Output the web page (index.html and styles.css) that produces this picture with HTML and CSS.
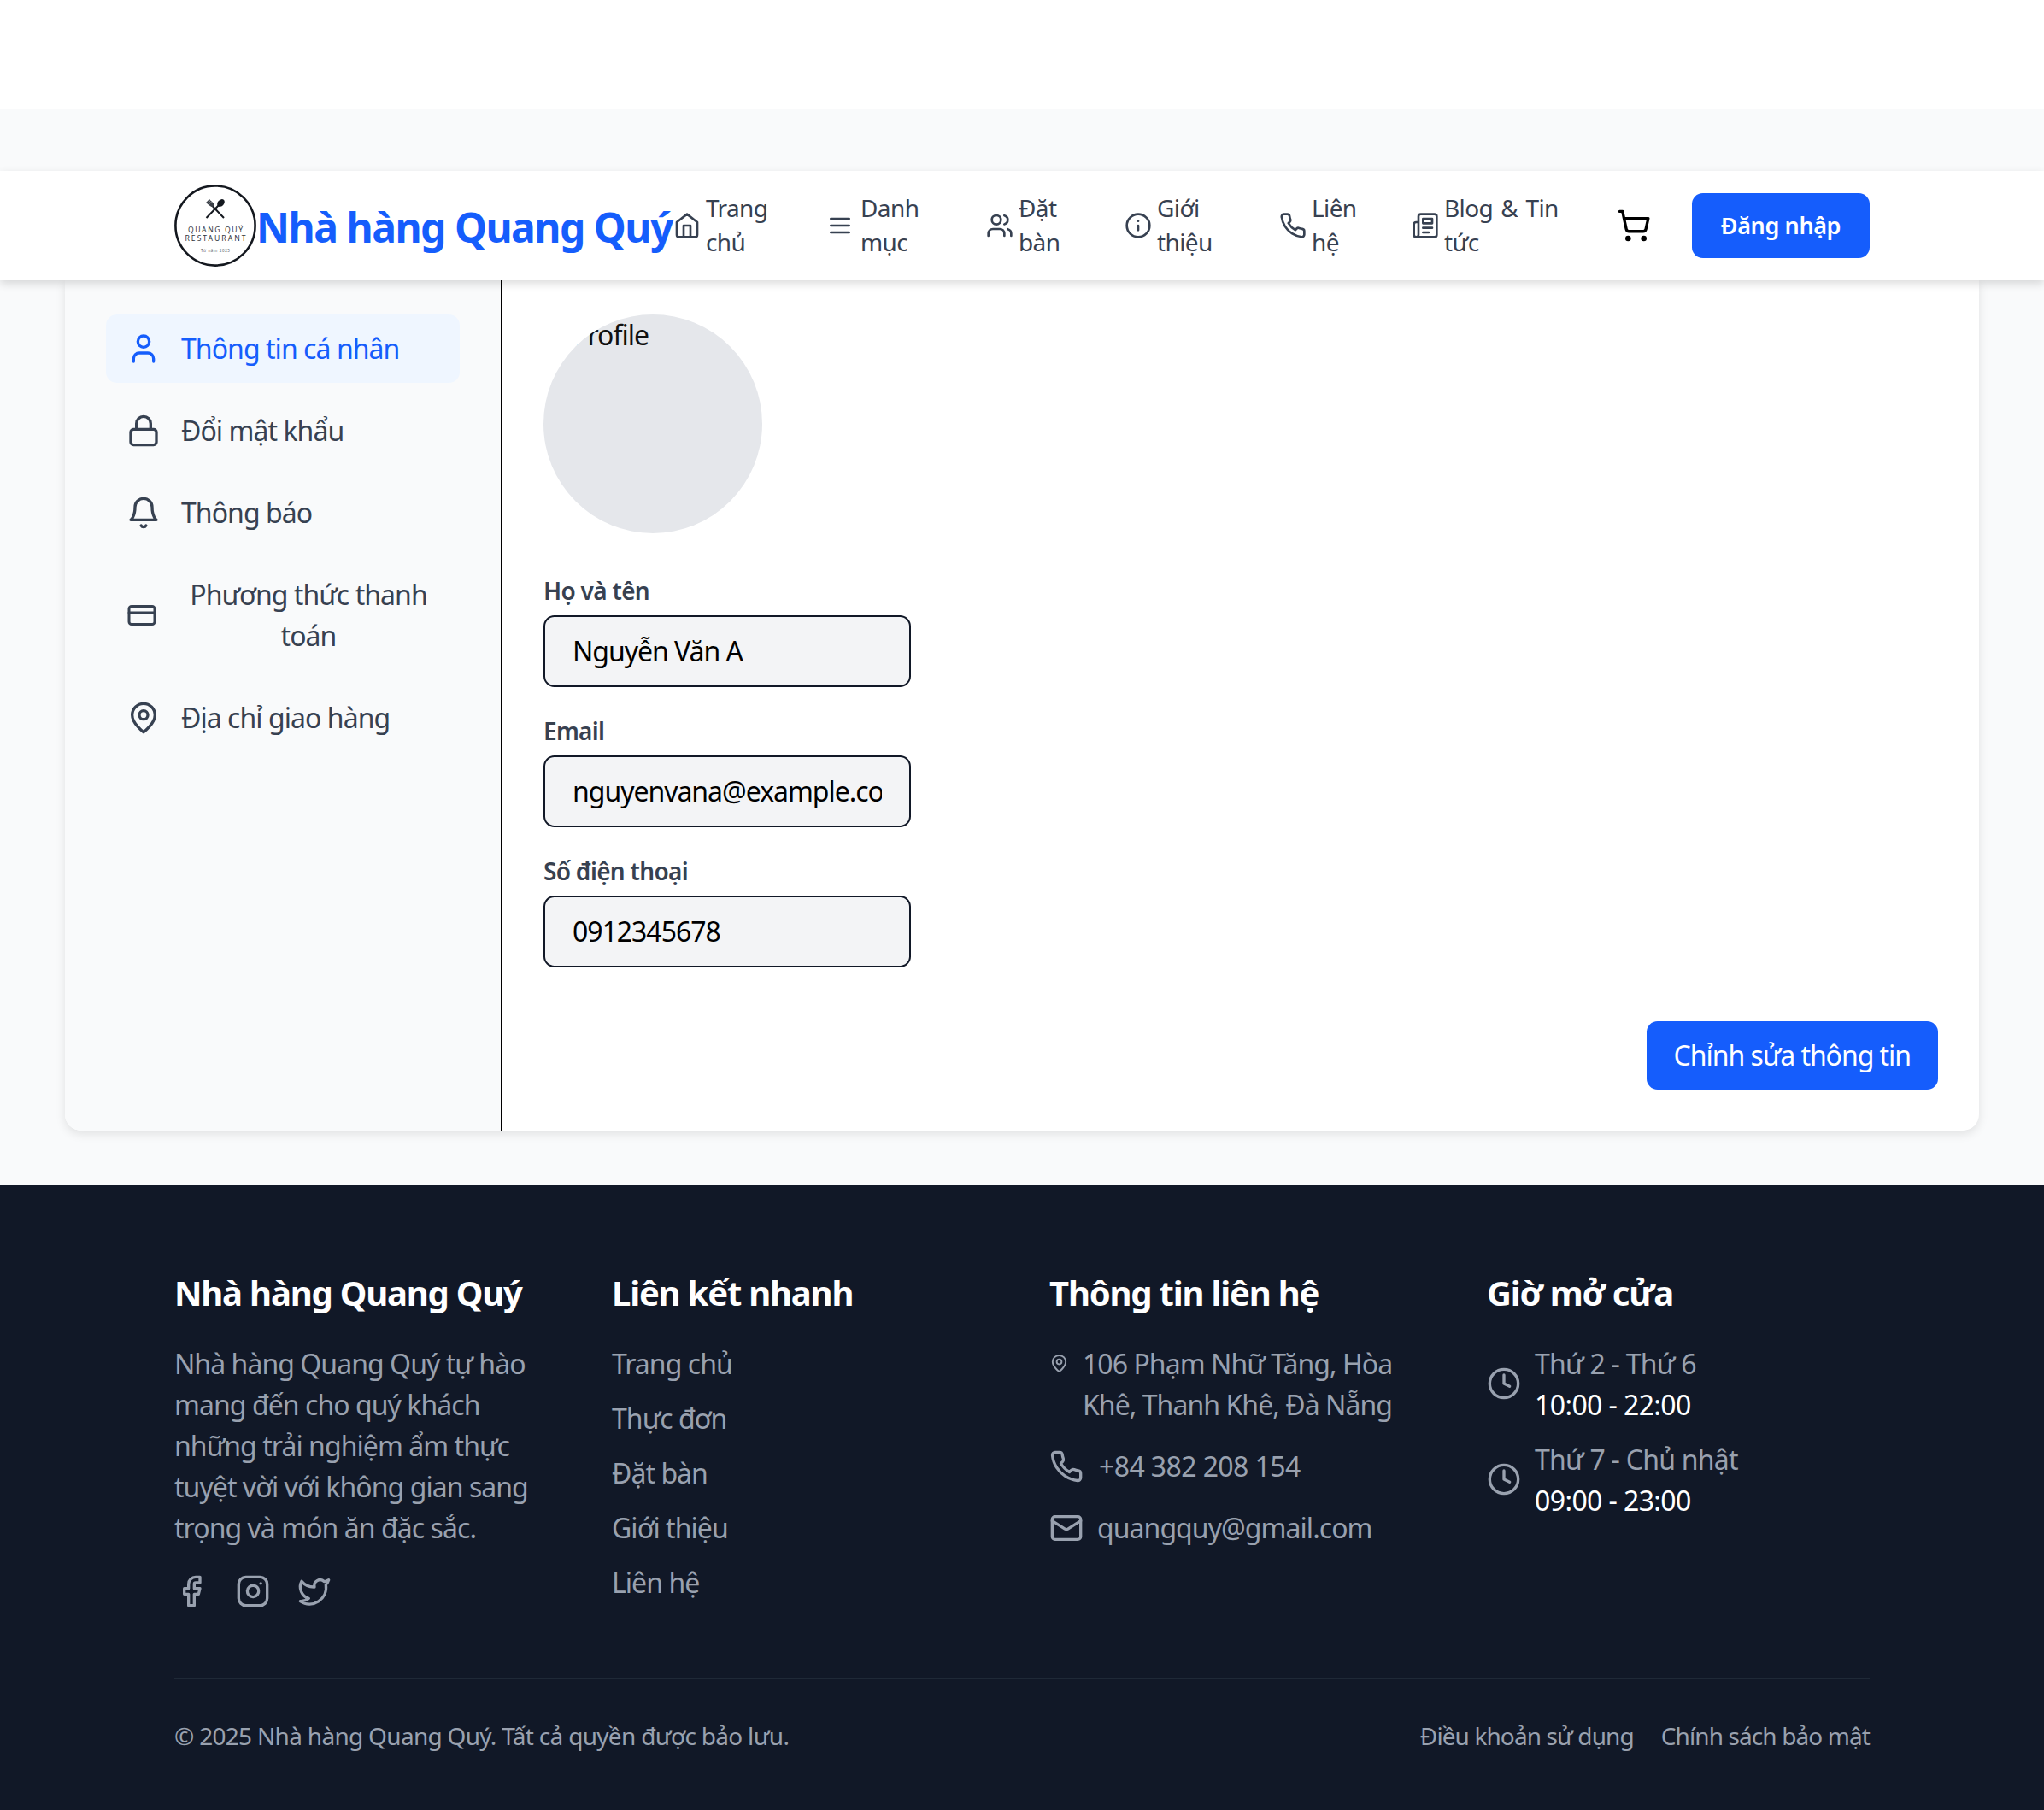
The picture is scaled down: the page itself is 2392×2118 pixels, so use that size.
FILE: index.html
```html
<!DOCTYPE html>
<html lang="vi">
<head>
<meta charset="utf-8">
<title>Nhà hàng Quang Quý</title>
<link rel="stylesheet" href="styles.css">
</head>
<body>
<svg class="defs" width="0" height="0" aria-hidden="true">
  <defs>
    <symbol id="i-home" viewBox="0 0 24 24"><path d="m3 9 9-7 9 7v11a2 2 0 0 1-2 2H5a2 2 0 0 1-2-2z"/><path d="M9 22V12h6v10"/></symbol>
    <symbol id="i-menu" viewBox="0 0 24 24"><path d="M4 6h16M4 12h16M4 18h16"/></symbol>
    <symbol id="i-users" viewBox="0 0 24 24"><path d="M16 21v-2a4 4 0 0 0-4-4H6a4 4 0 0 0-4 4v2"/><circle cx="9" cy="7" r="4"/><path d="M22 21v-2a4 4 0 0 0-3-3.87"/><path d="M16 3.13a4 4 0 0 1 0 7.75"/></symbol>
    <symbol id="i-info" viewBox="0 0 24 24"><circle cx="12" cy="12" r="10"/><path d="M12 16v-4M12 8h.01"/></symbol>
    <symbol id="i-phone" viewBox="0 0 24 24"><path d="M22 16.92v3a2 2 0 0 1-2.18 2 19.79 19.79 0 0 1-8.63-3.07 19.5 19.5 0 0 1-6-6 19.79 19.79 0 0 1-3.07-8.67A2 2 0 0 1 4.11 2h3a2 2 0 0 1 2 1.72c.13.96.36 1.9.7 2.81a2 2 0 0 1-.45 2.11L8.09 9.91a16 16 0 0 0 6 6l1.27-1.27a2 2 0 0 1 2.11-.45c.91.34 1.85.57 2.81.7A2 2 0 0 1 22 16.92z"/></symbol>
    <symbol id="i-news" viewBox="0 0 24 24"><path d="M4 22h16a2 2 0 0 0 2-2V4a2 2 0 0 0-2-2H8a2 2 0 0 0-2 2v16a2 2 0 0 1-2 2Zm0 0a2 2 0 0 1-2-2v-9c0-1.1.9-2 2-2h2"/><path d="M18 14h-8M15 18h-5"/><path d="M10 6h8v4h-8z"/></symbol>
    <symbol id="i-cart" viewBox="0 0 24 24"><circle cx="8" cy="21" r="1"/><circle cx="19" cy="21" r="1"/><path d="M2.05 2.05h2l2.66 12.42a2 2 0 0 0 2 1.58h9.78a2 2 0 0 0 1.95-1.57l1.65-7.43H5.12"/></symbol>
    <symbol id="i-user" viewBox="0 0 24 24"><path d="M19 21v-2a4 4 0 0 0-4-4H9a4 4 0 0 0-4 4v2"/><circle cx="12" cy="7" r="4"/></symbol>
    <symbol id="i-lock" viewBox="0 0 24 24"><rect x="3" y="11" width="18" height="11" rx="2"/><path d="M7 11V7a5 5 0 0 1 10 0v4"/></symbol>
    <symbol id="i-bell" viewBox="0 0 24 24"><path d="M6 8a6 6 0 0 1 12 0c0 7 3 9 3 9H3s3-2 3-9"/><path d="M10.3 21a1.94 1.94 0 0 0 3.4 0"/></symbol>
    <symbol id="i-card" viewBox="0 0 24 24"><rect x="2" y="5" width="20" height="14" rx="2"/><path d="M2 10h20"/></symbol>
    <symbol id="i-pin" viewBox="0 0 24 24"><path d="M20 10c0 6-8 12-8 12s-8-6-8-12a8 8 0 0 1 16 0Z"/><circle cx="12" cy="10" r="3"/></symbol>
    <symbol id="i-fb" viewBox="0 0 24 24"><path d="M18 2h-3a5 5 0 0 0-5 5v3H7v4h3v8h4v-8h3l1-4h-4V7a1 1 0 0 1 1-1h3z"/></symbol>
    <symbol id="i-ig" viewBox="0 0 24 24"><rect x="2" y="2" width="20" height="20" rx="5" ry="5"/><path d="M16 11.37A4 4 0 1 1 12.63 8 4 4 0 0 1 16 11.37z"/><path d="M17.5 6.5h.01"/></symbol>
    <symbol id="i-tw" viewBox="0 0 24 24"><path d="M22 4s-.7 2.1-2 3.4c1.6 10-9.4 17.3-18 11.6 2.2.1 4.4-.6 6-2C3 15.5.5 9.6 3 5c2.2 2.6 5.6 4.1 9 4-.9-4.2 4-6.6 7-3.8 1.1 0 3-1.2 3-1.2z"/></symbol>
    <symbol id="i-mail" viewBox="0 0 24 24"><rect x="2" y="4" width="20" height="16" rx="2"/><path d="m22 7-8.97 5.7a1.94 1.94 0 0 1-2.06 0L2 7"/></symbol>
    <symbol id="i-clock" viewBox="0 0 24 24"><circle cx="12" cy="12" r="10"/><path d="M12 6v6l4 2"/></symbol>
  </defs>
</svg>

<div class="topband"></div>

<header class="nav">
  <div class="nav-inner">
    <svg class="logo" viewBox="0 0 96 96" role="img" aria-label="Quang Quý Restaurant">
      <circle cx="48" cy="48" r="46.6" fill="#fff" stroke="#14181f" stroke-width="2.6"/>
      <path d="M37.5 39 52 24M58 39 43.5 24" stroke="#14181f" stroke-width="2" fill="none" stroke-linecap="butt"/>
      <ellipse cx="54.5" cy="21.5" rx="3.6" ry="5" transform="rotate(42 54.5 21.5)" fill="#14181f" stroke="none"/>
      <path d="M36.8 21.2 41 17l5.6 5.6c.6 1.6-.2 3-2.4 3.4-.8 0-1.4-.2-2-.8z" fill="#3a3f47" stroke="none"/>
      <path d="M38.2 22.6 42.4 18.4M39.6 24 43.8 19.8" stroke="#fff" stroke-width=".5" fill="none"/>
      <text class="logo-t" x="16" y="55.5" textLength="64">QUANG QUÝ</text>
      <text class="logo-t" x="12.5" y="65.5" textLength="71">RESTAURANT</text>
      <text class="logo-s" x="31" y="78.5" textLength="34">Từ năm 2025</text>
    </svg>
    <a class="brand">Nhà hàng Quang Quý</a>
    <nav class="links">
      <a class="link"><svg class="nic"><use href="#i-home"/></svg><span class="link-text">Trang<br>chủ</span></a>
      <a class="link link-menu"><svg class="nic"><use href="#i-menu"/></svg><span class="link-text">Danh<br>mục</span></a>
      <a class="link"><svg class="nic"><use href="#i-users"/></svg><span class="link-text">Đặt<br>bàn</span></a>
      <a class="link"><svg class="nic"><use href="#i-info"/></svg><span class="link-text">Giới<br>thiệu</span></a>
      <a class="link"><svg class="nic"><use href="#i-phone"/></svg><span class="link-text">Liên<br>hệ</span></a>
      <a class="link"><svg class="nic"><use href="#i-news"/></svg><span class="link-text">Blog &amp; Tin<br>tức</span></a>
      <a class="cart"><svg class="cic"><use href="#i-cart"/></svg></a>
      <a class="login">Đăng nhập</a>
    </nav>
  </div>
</header>

<main class="page">
  <section class="card">
    <aside class="side">
      <a class="side-item active"><svg class="sic"><use href="#i-user"/></svg><span>Thông tin cá nhân</span></a>
      <a class="side-item"><svg class="sic"><use href="#i-lock"/></svg><span>Đổi mật khẩu</span></a>
      <a class="side-item"><svg class="sic"><use href="#i-bell"/></svg><span>Thông báo</span></a>
      <a class="side-item"><svg class="sic sic-card"><use href="#i-card"/></svg><span class="grow">Phương thức thanh toán</span></a>
      <a class="side-item"><svg class="sic"><use href="#i-pin"/></svg><span>Địa chỉ giao hàng</span></a>
    </aside>
    <div class="content">
      <div class="avatar"><span>Profile</span></div>
      <form class="form">
        <label class="field"><span class="label">Họ và tên</span><input class="input" value="Nguyễn Văn A" readonly></label>
        <label class="field"><span class="label">Email</span><input class="input" value="nguyenvana@example.com" readonly></label>
        <label class="field"><span class="label">Số điện thoại</span><input class="input" value="0912345678" readonly></label>
      </form>
      <div class="actions"><button class="edit" type="button">Chỉnh sửa thông tin</button></div>
    </div>
  </section>
</main>

<footer class="footer">
  <div class="foot-inner">
    <div class="cols">
      <div class="col">
        <h3 class="fh">Nhà hàng Quang Quý</h3>
        <p class="about">Nhà hàng Quang Quý tự hào mang đến cho quý khách những trải nghiệm ẩm thực tuyệt vời với không gian sang trọng và món ăn đặc sắc.</p>
        <div class="socials">
          <svg class="fic"><use href="#i-fb"/></svg>
          <svg class="fic"><use href="#i-ig"/></svg>
          <svg class="fic"><use href="#i-tw"/></svg>
        </div>
      </div>
      <div class="col">
        <h3 class="fh">Liên kết nhanh</h3>
        <ul class="flist">
          <li>Trang chủ</li><li>Thực đơn</li><li>Đặt bàn</li><li>Giới thiệu</li><li>Liên hệ</li>
        </ul>
      </div>
      <div class="col">
        <h3 class="fh">Thông tin liên hệ</h3>
        <div class="contact">
          <div class="crow crow-top"><svg class="fic-s"><use href="#i-pin"/></svg><span>106 Phạm Nhữ Tăng, Hòa Khê, Thanh Khê, Đà Nẵng</span></div>
          <div class="crow"><svg class="fic"><use href="#i-phone"/></svg><span class="num">+84 382 208 154</span></div>
          <div class="crow"><svg class="fic"><use href="#i-mail"/></svg><span>quangquy@gmail.com</span></div>
        </div>
      </div>
      <div class="col">
        <h3 class="fh">Giờ mở cửa</h3>
        <div class="hours">
          <div class="hrow"><svg class="fic hic"><use href="#i-clock"/></svg><div><div>Thứ 2 - Thứ 6</div><div class="time">10:00 - 22:00</div></div></div>
          <div class="hrow"><svg class="fic hic"><use href="#i-clock"/></svg><div><div>Thứ 7 - Chủ nhật</div><div class="time">09:00 - 23:00</div></div></div>
        </div>
      </div>
    </div>
    <div class="foot-bottom">
      <span>© 2025 Nhà hàng Quang Quý. Tất cả quyền được bảo lưu.</span>
      <div class="legal"><a>Điều khoản sử dụng</a><a>Chính sách bảo mật</a></div>
    </div>
  </div>
</footer>
</body>
</html>
```
FILE: styles.css
```css
* { box-sizing: border-box; }
html, body { margin: 0; padding: 0; }
body {
  background: #f9fafb;
  color: #111827;
  font-family: "Noto Sans", sans-serif;
  font-size: 32px;
  line-height: 48px;
  letter-spacing: -.95px;
}
.defs { position: absolute; }
svg { fill: none; stroke: currentColor; stroke-linecap: round; stroke-linejoin: round; flex: none; }

.topband { height: 128px; margin-bottom: 72px; background: #fff; }

.nav { position: relative; z-index: 2; height: 128px; background: #fff; box-shadow: 0 4px 10px rgba(0,0,0,.14); }
.nav-inner { width: 1984px; height: 100%; margin: 0 auto; display: flex; align-items: center; }
.logo { width: 96px; height: 96px; stroke: none; }
.logo-t { font-size: 8.6px; letter-spacing: 0; fill: #2f333a; stroke: none; font-family: "Noto Sans", sans-serif; }
.logo-s { font-size: 4.6px; letter-spacing: 0; fill: #555b64; stroke: none; font-family: "Noto Sans", sans-serif; }
.brand { width: 487.6px; padding-top: 3px; font-size: 48px; line-height: 72px; font-weight: 700; color: #155dfc; letter-spacing: -1.5px; white-space: nowrap; }
.links { display: grid; grid-template-columns: 182px 184px 162px 181px 155px 240.4px 88px 208px; align-items: center; }
.link { display: flex; align-items: center; gap: 6.4px; font-size: 28px; line-height: 40px; color: #374151; letter-spacing: -.6px; word-spacing: 2.5px; }
.link-text { padding-bottom: 2px; }
.link-menu { margin-left: -3px; gap: 8.4px; }
.nic { width: 32px; height: 32px; stroke-width: 2; }
.cart { display: flex; color: #000; }
.cic { width: 40px; height: 40px; stroke-width: 2; }
.login { height: 76px; border-radius: 12.8px; background: #155dfc; color: #fff; font-size: 27px; line-height: 76px; font-weight: 600; text-align: center; letter-spacing: -.4px; }

.page { padding: 0 76px 64px; }
.card { display: flex; height: 995px; background: #fff; border-radius: 0 0 19px 19px; box-shadow: 0 4px 12px rgba(0,0,0,.1); overflow: hidden; }
.side { width: 512px; flex: none; padding: 40px 48px; background: #f9fafb; border-right: 2px solid #000; display: flex; flex-direction: column; gap: 16px; color: #374151; }
.side-item { display: flex; align-items: center; gap: 24px; padding: 16px 24px; border-radius: 12.8px; }
.side-item.active { background: #eff6ff; color: #155dfc; }
.sic { width: 40px; height: 40px; stroke-width: 2; }
.sic-card { width: 36px; height: 36px; }
.grow { flex: 1; text-align: center; }

.content { flex: 1; padding: 40px 48px; display: flex; flex-direction: column; }
.avatar { width: 256px; height: 256px; border-radius: 50%; background: #e5e7eb; overflow: hidden; padding-left: 33px; color: #111; line-height: 48px; }
.form { margin-top: 45px; width: 430px; display: flex; flex-direction: column; gap: 29.5px; }
.field { display: flex; flex-direction: column; gap: 6.5px; }
.label { font-size: 28px; line-height: 44px; font-weight: 600; color: #374151; letter-spacing: -.7px; }
.input { width: 100%; height: 84px; border: 2px solid #111827; border-radius: 12.8px; background: #f3f4f6; padding: 0 32px; font: inherit; font-size: 32px; letter-spacing: -1.03px; color: #000; outline: none; }
.actions { margin-top: auto; margin-bottom: 8px; display: flex; justify-content: flex-end; }
.edit { height: 80px; padding: 0 32px; border: 0; border-radius: 12.8px; background: #155dfc; color: #fff; font: inherit; letter-spacing: -1.05px; }

.footer { background: #111827; color: #99a1af; height: 731px; padding-top: 96px; }
.foot-inner { width: 1984px; margin: 0 auto; }
.cols { display: grid; grid-template-columns: repeat(4, 448px); column-gap: 64px; height: 401px; margin-bottom: 79px; }
.fh { margin: 0 0 29px; font-size: 40px; line-height: 60px; font-weight: 700; color: #fff; letter-spacing: -1.2px; }
.about { margin: 0 0 30px; }
.socials { display: flex; gap: 32px; }
.fic { width: 40px; height: 40px; stroke-width: 2; }
.fic-s { width: 23px; height: 23px; stroke-width: 2; margin-top: 12px; }
.flist { list-style: none; margin: 0; padding: 0; display: flex; flex-direction: column; gap: 16px; }
.contact { display: flex; flex-direction: column; gap: 24px; }
.crow { display: flex; align-items: center; gap: 16px; }
.crow-top { align-items: flex-start; }
.num { margin-left: 2px; letter-spacing: -.6px; }
.hours { display: flex; flex-direction: column; gap: 16px; letter-spacing: -.75px; }
.hrow { display: flex; align-items: center; gap: 16px; }
.hic { margin-top: -2px; }
.time { color: #fff; letter-spacing: -.6px; }
.foot-bottom { border-top: 2px solid #1f2937; padding-top: 44px; display: flex; justify-content: space-between; font-size: 28px; line-height: 44px; letter-spacing: -.7px; }
.legal { display: flex; gap: 32px; letter-spacing: -.9px; }
```
